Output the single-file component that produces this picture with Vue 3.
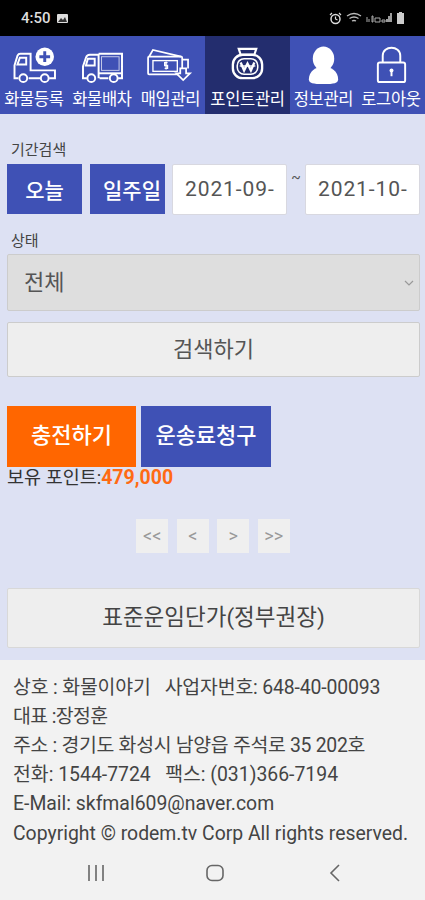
<script setup>
const rows = [
  { text: '상호 : 화물이야기 \u00a0 사업자번호: 648-40-00093', cls: 'tight-a' },
  { text: '대표 :장정훈', cls: 'tight-b' },
  { text: '주소 : 경기도 화성시 남양읍 주석로 35 202호', cls: 'tight-c' },
  { text: '전화: 1544-7724 \u00a0 팩스: (031)366-7194', cls: '' },
  { text: 'E-Mail: skfmal609@naver.com', cls: '' },
  { text: 'Copyright © rodem.tv Corp All rights reserved.', cls: '' }
]
const pager = ['<<', '<', '>', '>>']
</script>

<template>
  <div class="page">
    <header class="status">
      <div class="status-left">
        <span>4:50</span>
        <svg width="13" height="11" viewBox="0 0 13 11"><rect x="1" y="1" width="11" height="9" rx="1" fill="#ddd"/><path d="M2 9l3-4 2 2 2-3 2 5z" fill="#333"/></svg>
      </div>
      <div class="status-right">
        <svg width="13" height="13" viewBox="0 0 13 13"><circle cx="6.500" cy="7" r="4.500" fill="none" stroke="#ddd" stroke-width="1.500"/><path d="M6.500 4.500V7l2 1M1 3l2-2M12 3l-2-2" stroke="#ddd" stroke-width="1.200" fill="none"/></svg>
        <svg width="16" height="12" viewBox="0 0 16 12"><path d="M1 4q7-5 14 0M3.500 6.500q4.500-3 9 0M6 9q2-1 4 0" stroke="#bbb" stroke-width="1.300" fill="none"/></svg>
        <svg width="26" height="12" viewBox="0 0 26 12"><path d="M1 5v5M3 7v3M6 4h1v6h-1zM9 6h5v4H9zM16 8h3v2h-3z" stroke="#aaa" stroke-width="1" fill="none"/><path d="M21 10V7M23 10V4M25 10V1" stroke="#ddd" stroke-width="1.400"/></svg>
        <svg width="9" height="14" viewBox="0 0 9 14"><path d="M3 1h3v1h2v11H1V2h2z" fill="#ccc"/></svg>
      </div>
    </header>

    <nav class="nav">
      <a class="nav-item">
        <svg class="ico" viewBox="0 0 48 40" fill="none" stroke="#fff" stroke-width="2">
          <path d="M7.500 33H3.500V20l3-10q1-2 3-2H20v17h25v8h-6M18 33h12"/><path d="M6.500 19h9v-7H9z"/><circle cx="12.500" cy="33" r="4"/><circle cx="34.500" cy="33" r="4"/>
          <circle cx="34.500" cy="11" r="9.500" fill="#fff" stroke="none"/><path d="M34.500 5.500v11M29 11h11" stroke="#3f51b5" stroke-width="3"/>
        </svg>
        <span>화물등록</span>
      </a>
      <a class="nav-item">
        <svg class="ico" viewBox="0 0 48 40" fill="none" stroke="#fff" stroke-width="2">
          <path d="M20 8h24v25h-4M30 33h-9M8 33H4V21l3-9q1-3 4-3h9v24"/><path d="M7 20h9v-7h-7z"/><rect x="23" y="11" width="18" height="14" stroke-width="1" stroke-opacity="0.700"/><path d="M20 28h24"/><circle cx="12.500" cy="33" r="4"/><circle cx="35.500" cy="33" r="4"/>
        </svg>
        <span>화물배차</span>
      </a>
      <a class="nav-item">
        <svg class="ico" viewBox="0 0 48 40" fill="none" stroke="#fff" stroke-width="1.800">
          <path d="M2 11l4-7 29 7"/><rect x="1" y="11" width="35" height="18" rx="1"/><rect x="6" y="15" width="25" height="11" stroke-width="1.400"/><path d="M21 17h-3v3h3v3h-3M19.500 16v8" stroke-width="1.300"/><path d="M36 14h6v9"/><path d="M34 23h6v5h4l-7 7-7-7h4z" fill="#3f51b5"/>
        </svg>
        <span>매입관리</span>
      </a>
      <a class="nav-item active">
        <svg class="ico" viewBox="0 0 48 40" fill="none" stroke="#fff" stroke-width="2.200">
          <path d="M15 3h18l-2 6H17z"/><rect x="9" y="9" width="30" height="24" rx="10" stroke-width="2.400"/><rect x="13.500" y="13" width="21" height="16" rx="7" stroke-width="1.600"/>
          <path d="M17 17l3.500 8 3.500-7 3.500 7 3.500-8" stroke-width="2.400"/><path d="M16 20.500h16" stroke-width="1.400"/>
        </svg>
        <span>포인트관리</span>
      </a>
      <a class="nav-item">
        <svg class="ico" viewBox="0 0 48 40" fill="#fff">
          <ellipse cx="24" cy="13" rx="11" ry="12.500"/><path d="M24 21c-8 0-15 5-15 13 0 4 4 5 15 5s15-1 15-5c0-8-7-13-15-13z"/>
        </svg>
        <span>정보관리</span>
      </a>
      <a class="nav-item">
        <svg class="ico" viewBox="0 0 48 40" fill="none" stroke="#fff" stroke-width="2">
          <path d="M15 17V10c0-11 18-11 18 0v7"/><rect x="10" y="17" width="28" height="20" rx="2"/><path d="M24 25v6" stroke-width="2"/><circle cx="24" cy="25" r="2" fill="#fff" stroke="none"/>
        </svg>
        <span>로그아웃</span>
      </a>
    </nav>

    <main class="main">
      <div class="label">기간검색</div>
      <div class="period">
        <button class="btn-blue today">오늘</button>
        <button class="btn-blue week"><span>일주일</span></button>
        <div class="date">2021-09-</div>
        <span class="tilde">~</span>
        <div class="date">2021-10-</div>
      </div>

      <div class="label status-label">상태</div>
      <div class="select">
        <span>전체</span>
        <svg width="10" height="6" viewBox="0 0 10 6"><path d="M1 1l4 4 4-4" fill="none" stroke="#999" stroke-width="1.200"/></svg>
      </div>

      <button class="search">검색하기</button>

      <div class="actions">
        <button class="charge">충전하기</button>
        <button class="bill">운송료청구</button>
      </div>
      <div class="points">보유 포인트:<b>479,000</b></div>

      <div class="pager">
        <span v-for="p in pager" :key="p" class="page-btn">{{ p }}</span>
      </div>

      <button class="standard">표준운임단가(정부권장)</button>
    </main>

    <footer class="footer">
      <div v-for="r in rows" :key="r.text" :class="r.cls">{{ r.text }}</div>
    </footer>

    <div class="softkeys">
      <svg width="20" height="18" viewBox="0 0 20 18"><path d="M3 1v16M10 1v16M17 1v16" stroke="#666" stroke-width="1.600"/></svg>
      <svg width="20" height="18" viewBox="0 0 20 18"><rect x="2" y="1.500" width="16" height="15" rx="5" fill="none" stroke="#666" stroke-width="1.600"/></svg>
      <svg width="14" height="18" viewBox="0 0 14 18"><path d="M11 1L3 9l8 8" fill="none" stroke="#666" stroke-width="1.600"/></svg>
    </div>
  </div>
</template>

<style>
html, body { margin: 0; background: #f2f2f2; }
</style>

<style scoped>
.page {
  width: 425px;
  height: 900px;
  overflow: hidden;
  display: flex;
  flex-direction: column;
  font-family: Roboto, "Noto Sans CJK KR", sans-serif;
  color: #333;
  background: #dde1f3;
}
button { font-family: inherit; border: 0; padding: 0; margin: 0; box-sizing: border-box; }
.status {
  height: 36px;
  flex: none;
  background: #000;
  display: flex;
  justify-content: space-between;
  align-items: center;
  padding: 8px 20px 8px 21px;
  box-sizing: border-box;
  color: #ddd;
  font-size: 15px;
  font-weight: 500;
}
.status-left, .status-right { display: flex; align-items: center; gap: 5px; }
.status-right { gap: 4px; }
.nav {
  height: 78px;
  flex: none;
  background: #3f51b5;
  display: grid;
  grid-template-columns: 68px 68px 69px 85px 67px 68px;
}
.nav-item {
  display: flex;
  flex-direction: column;
  align-items: center;
  justify-content: flex-start;
  padding-top: 10px;
  color: #fff;
  font-size: 16.500px;
  line-height: 20px;
  letter-spacing: -0.300px;
  white-space: nowrap;
  min-width: 0;
}
.nav-item.active { background: #232d6e; }
.ico { width: 47px; height: 39px; margin-bottom: 5px; flex: none; }
.main {
  flex: 1;
  padding: 28px 5px 0 7px;
  display: flex;
  flex-direction: column;
}
.label { font-size: 15px; line-height: 16px; color: #444; margin-left: 4px; }
.period { display: flex; margin-top: 6px; height: 51px; align-items: flex-start; }
.btn-blue {
  background: #3f51b5;
  color: #fff;
  height: 50px;
  font-size: 21px;
  font-weight: 500;
  overflow: hidden;
  white-space: nowrap;
}
.today { width: 75px; margin-right: 8px; }
.week { width: 75px; margin-right: 7px; text-align: left; padding-left: 13px; }
.date {
  width: 115px;
  height: 51px;
  box-sizing: border-box;
  background: #fff;
  border: 1px solid #d8d8e0;
  border-radius: 2px;
  font-size: 21px;
  letter-spacing: 0.900px;
  color: #555;
  line-height: 49px;
  padding-left: 12px;
  overflow: hidden;
  white-space: nowrap;
}
.tilde { width: 18px; text-align: center; font-size: 14px; line-height: 20px; color: #555; margin-top: 3px; }
.status-label { margin-top: 18px; }
.select {
  margin-top: 5px;
  height: 57px;
  box-sizing: border-box;
  background: #dedede;
  border: 1px solid #ccc;
  border-radius: 2px;
  display: flex;
  align-items: center;
  justify-content: space-between;
  padding: 0 5px 5px 16px;
  font-size: 22px;
  color: #555;
}
.select svg { margin-top: 5px; }
.search {
  margin-top: 11px;
  height: 55px;
  padding-bottom: 6px;
  background: #eeeeee;
  border: 1px solid #ccc;
  border-radius: 2px;
  font-size: 22px;
  color: #555;
}
.actions { display: flex; gap: 5px; margin-top: 29px; }
.charge, .bill { height: 61px; padding-bottom: 8px; font-size: 22px; font-weight: 500; color: #fff; }
.charge { width: 129px; background: #ff6600; }
.bill { width: 130px; background: #3f51b5; }
.points { font-size: 18.500px; line-height: 20px; font-weight: 400; color: #333; margin-top: 1px; }
.points b { color: #ff6a13; font-weight: 700; font-size: 19.500px; }
.pager { display: flex; justify-content: center; gap: 8.500px; margin-top: 31px; padding-right: 1px; }
.page-btn {
  width: 32px;
  height: 34px;
  background: #efefef;
  color: #999;
  font-size: 18px;
  line-height: 34px;
  text-align: center;
}
.standard {
  margin-top: 35px;
  height: 60px;
  padding-bottom: 6px;
  background: #eeeeee;
  border: 1px solid #d8d8d8;
  border-radius: 2px;
  font-size: 22.500px;
  color: #444;
}
.footer {
  flex: none;
  background: #f2f2f2;
  height: 188px;
  box-sizing: border-box;
  padding: 12.500px 0 0 13px;
  font-size: 19.400px;
  line-height: 29.200px;
  color: #444;
  white-space: nowrap;
}
.tight-a { letter-spacing: -0.150px; }
.tight-b { letter-spacing: -0.600px; }
.tight-c { letter-spacing: -0.300px; }
.softkeys {
  flex: none;
  height: 52px;
  background: #f2f2f2;
  display: grid;
  grid-template-columns: 191px 48px 192px;
  justify-items: center;
  align-items: center;
  padding-bottom: 3px;
  box-sizing: border-box;
}
</style>
